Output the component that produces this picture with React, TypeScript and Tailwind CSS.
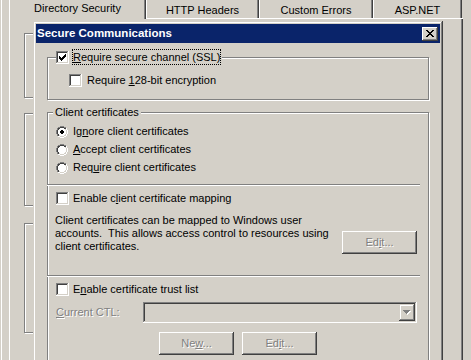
import React from 'react';

const COLORS: Record<string, string> = {
  G: '#808080',
  K: '#404040',
  W: '#ffffff',
  w: '#ffffff',
  L: '#d4d0c8',
  B: '#000000',
  X: '#000000',
};

function Pixels({ rows, color, className }: { rows: string[]; color?: string; className?: string }) {
  const w = rows[0].length;
  const h = rows.length;
  const rects: React.ReactNode[] = [];
  rows.forEach((r, y) => {
    for (let x = 0; x < r.length; x++) {
      const c = r[x];
      if (c === '.' || c === ' ') continue;
      rects.push(<rect key={`${x}-${y}`} x={x} y={y} width={1} height={1} fill={color ?? COLORS[c]} />);
    }
  });
  return (
    <svg width={w} height={h} viewBox={`0 0 ${w} ${h}`} shapeRendering="crispEdges" className={className}>
      {rects}
    </svg>
  );
}

const CHECK = ['......X', '.....XX', 'X...XXX', 'XX.XXX.', 'XXXXX..', '.XXX...', '..X....'];
const CLOSE = ['XX....XX', '.XX..XX.', '..XXXX..', '...XX...', '..XXXX..', '.XX..XX.', 'XX....XX'];
const ARROW = ['XXXXXXX', '.XXXXX.', '..XXX..', '...X...'];

function radioRows(checked: boolean) {
  const base = [
    '....GGGG....',
    '..GGKKKKGG..',
    '.GKKwwwwKKW.',
    '.GKwwwwwwLW.',
    'GKwwwwwwwwLW',
    'GKwwwwwwwwLW',
    'GKwwwwwwwwLW',
    'GKwwwwwwwwLW',
    '.GKwwwwwwLW.',
    '.GKLwwwwLLW.',
    '..WWLLLLWW..',
    '....WWWW....',
  ];
  if (!checked) return base;
  const dot = [
    [4, '.BB.'],
    [5, 'BBBB'],
    [6, 'BBBB'],
    [7, '.BB.'],
  ] as const;
  const out = [...base];
  dot.forEach(([y, pat]) => {
    const row = out[y].split('');
    for (let i = 0; i < 4; i++) if (pat[i] === 'B') row[4 + i] = 'B';
    out[y] = row.join('');
  });
  return out;
}

function Checkbox({ checked }: { checked?: boolean }) {
  return (
    <div className="w-[13px] h-[13px] shrink-0 bg-white flex items-center justify-center shadow-[inset_-1px_-1px_0_#fff,inset_1px_1px_0_#808080,inset_-2px_-2px_0_#d4d0c8,inset_2px_2px_0_#404040]">
      {checked && <Pixels rows={CHECK} />}
    </div>
  );
}

function Radio({ checked, className, children }: { checked?: boolean; className: string; children: React.ReactNode }) {
  return (
    <div className={className}>
      <div className="w-[13px] h-[13px] shrink-0 flex items-center">
        <Pixels rows={radioRows(!!checked)} />
      </div>
      <span className="ml-[4px]">{children}</span>
    </div>
  );
}

function Btn({ className, children }: { className: string; children: React.ReactNode }) {
  return (
    <div
      className={`${className} flex items-center justify-center w-[75px] h-[23px] shrink-0 text-[#808080] [text-shadow:1px_1px_0_#fff] shadow-[inset_-1px_-1px_0_#404040,inset_1px_1px_0_#fff,inset_-2px_-2px_0_#808080,inset_2px_2px_0_#d4d0c8]`}
    >
      <span>{children}</span>
    </div>
  );
}

function Tab({ className, children }: { className: string; children: React.ReactNode }) {
  return (
    <div
      className={`${className} h-[19px] pt-[4px] text-center border-b border-white shadow-[inset_1px_0_0_#fff,inset_-1px_0_0_#404040,inset_-2px_0_0_#808080]`}
    >
      {children}
    </div>
  );
}

export default function App() {
  return (
    <div className="relative w-[471px] h-[360px] overflow-hidden bg-[#d4d0c8] font-['Liberation_Sans',Arial,sans-serif] text-[11px] leading-[13px] text-black pl-[1px]">
      {/* Property sheet behind */}
      <div className="h-full border-l border-white pl-[7px]">
        <div className="w-[454px] flex flex-col">
          <div className="flex h-[19px]">
            <div className="w-[137px] h-[19px] pt-[2px] text-center shadow-[inset_1px_0_0_#fff,inset_-1px_0_0_#404040,inset_-2px_0_0_#808080]">
              Directory Security
            </div>
            <Tab className="w-[113px]">HTTP Headers</Tab>
            <Tab className="w-[114px]">Custom Errors</Tab>
            <Tab className="w-[89px]">ASP.NET</Tab>
            <div className="flex-1 border-b border-white" />
          </div>
          <div className="h-[341px] pl-[15px] flex flex-col shadow-[inset_1px_0_0_#fff,inset_-1px_0_0_#404040,inset_-2px_0_0_#808080]">
            <div className="mt-[14px] w-[405px] h-[65px] border border-[#808080] shadow-[inset_1px_1px_0_#fff,1px_1px_0_#fff]" />
            <div className="mt-[15px] w-[405px] h-[93px] border border-[#808080] shadow-[inset_1px_1px_0_#fff,1px_1px_0_#fff]" />
            <div className="mt-[17px] w-[405px] h-[110px] border border-[#808080] shadow-[inset_1px_1px_0_#fff,1px_1px_0_#fff]" />
          </div>
        </div>
      </div>

      {/* Dialog */}
      <div className="absolute left-[33px] top-[21px] w-[410px] h-[345px] p-[3px] flex flex-col bg-[#d4d0c8] shadow-[inset_-1px_-1px_0_#404040,inset_1px_1px_0_#d4d0c8,inset_-2px_-2px_0_#808080,inset_2px_2px_0_#fff]">
        <div className="h-[19px] shrink-0 bg-[#0a246a] flex items-center justify-between pl-[1px] pr-[2px]">
          <span className="text-white font-bold text-[11.5px] leading-[13px]">Secure Communications</span>
          <div className="w-[16px] h-[14px] bg-[#d4d0c8] flex items-center justify-center shadow-[inset_-1px_-1px_0_#404040,inset_1px_1px_0_#fff,inset_-2px_-2px_0_#808080,inset_2px_2px_0_#d4d0c8]">
            <Pixels rows={CLOSE} />
          </div>
        </div>

        <div className="flex flex-col px-[11px]">
          {/* SSL group */}
          <div className="mt-[14px] h-[43px] flex flex-col border border-[#808080] shadow-[inset_1px_1px_0_#fff,1px_1px_0_#fff]">
            <div className="-mt-[9px] ml-[8px] w-fit h-[16px] flex items-center bg-[#d4d0c8] pr-[1px]">
              <Checkbox checked />
              <span className="ml-[3px] h-[16px] border border-dotted border-black leading-[14px]">
                <u>R</u>equire secure channel (SSL)
              </span>
            </div>
            <div className="mt-[9px] ml-[21px] h-[13px] flex items-center">
              <Checkbox />
              <span className="ml-[5px]">
                Require <u>1</u>28-bit encryption
              </span>
            </div>
          </div>

          {/* Client certificates group */}
          <div className="mt-[12px] h-[260px] flex flex-col border border-[#808080] shadow-[inset_1px_1px_0_#fff,1px_1px_0_#fff]">
            <div className="-mt-[7px] ml-[5px] w-fit px-[2px] h-[13px] bg-[#d4d0c8]">Client certificates</div>
            <Radio checked className="mt-[6px] ml-[8px] h-[13px] flex items-center">
              Ig<u>n</u>ore client certificates
            </Radio>
            <Radio className="mt-[5px] ml-[8px] h-[13px] flex items-center">
              <u>A</u>ccept client certificates
            </Radio>
            <Radio className="mt-[5px] ml-[8px] h-[13px] flex items-center">
              Req<u>u</u>ire client certificates
            </Radio>

            <div className="mt-[10px] -ml-[1px] w-[373px] h-[2px] border-t border-b border-t-[#808080] border-b-white" />

            <div className="mt-[6px] ml-[8px] h-[13px] flex items-center">
              <Checkbox />
              <span className="ml-[4px]">
                Enable c<u>l</u>ient certificate mapping
              </span>
            </div>

            <div className="mt-[9px] flex justify-between">
              <p className="ml-[7px] leading-[13px] whitespace-pre">
                {'Client certificates can be mapped to Windows user\naccounts.  This allows access control to resources using\nclient certificates.'}
              </p>
              <Btn className="mt-[17px] mr-[11px]">
                Ed<u>i</u>t...
              </Btn>
            </div>

            <div className="mt-[21px] -ml-[1px] w-[373px] h-[2px] border-t border-b border-t-[#808080] border-b-white" />

            <div className="mt-[6px] ml-[8px] h-[13px] flex items-center">
              <Checkbox />
              <span className="ml-[4px]">
                E<u>n</u>able certificate trust list
              </span>
            </div>

            <div className="mt-[6px] flex items-center">
              <div className="w-[95px] pl-[8px] text-[#808080] [text-shadow:1px_1px_0_#fff]">
                <u>C</u>urrent CTL:
              </div>
              <div className="w-[274px] h-[21px] p-[2px] flex justify-end bg-[#d4d0c8] shadow-[inset_-1px_-1px_0_#fff,inset_1px_1px_0_#808080,inset_-2px_-2px_0_#d4d0c8,inset_2px_2px_0_#404040]">
                <div className="relative w-[16px] h-full flex items-center justify-center shadow-[inset_-1px_-1px_0_#404040,inset_1px_1px_0_#d4d0c8,inset_-2px_-2px_0_#808080,inset_2px_2px_0_#fff]">
                  <div className="relative w-[8px] h-[5px]">
                    <Pixels rows={ARROW} color="#ffffff" className="absolute left-[1px] top-[1px]" />
                    <Pixels rows={ARROW} color="#808080" className="absolute left-0 top-0" />
                  </div>
                </div>
              </div>
            </div>

            <div className="mt-[9px] ml-[111px] flex gap-[8px]">
              <Btn className="">
                Ne<u>w</u>...
              </Btn>
              <Btn className="">
                Ed<u>i</u>t...
              </Btn>
            </div>
          </div>
        </div>
      </div>
    </div>
  );
}
